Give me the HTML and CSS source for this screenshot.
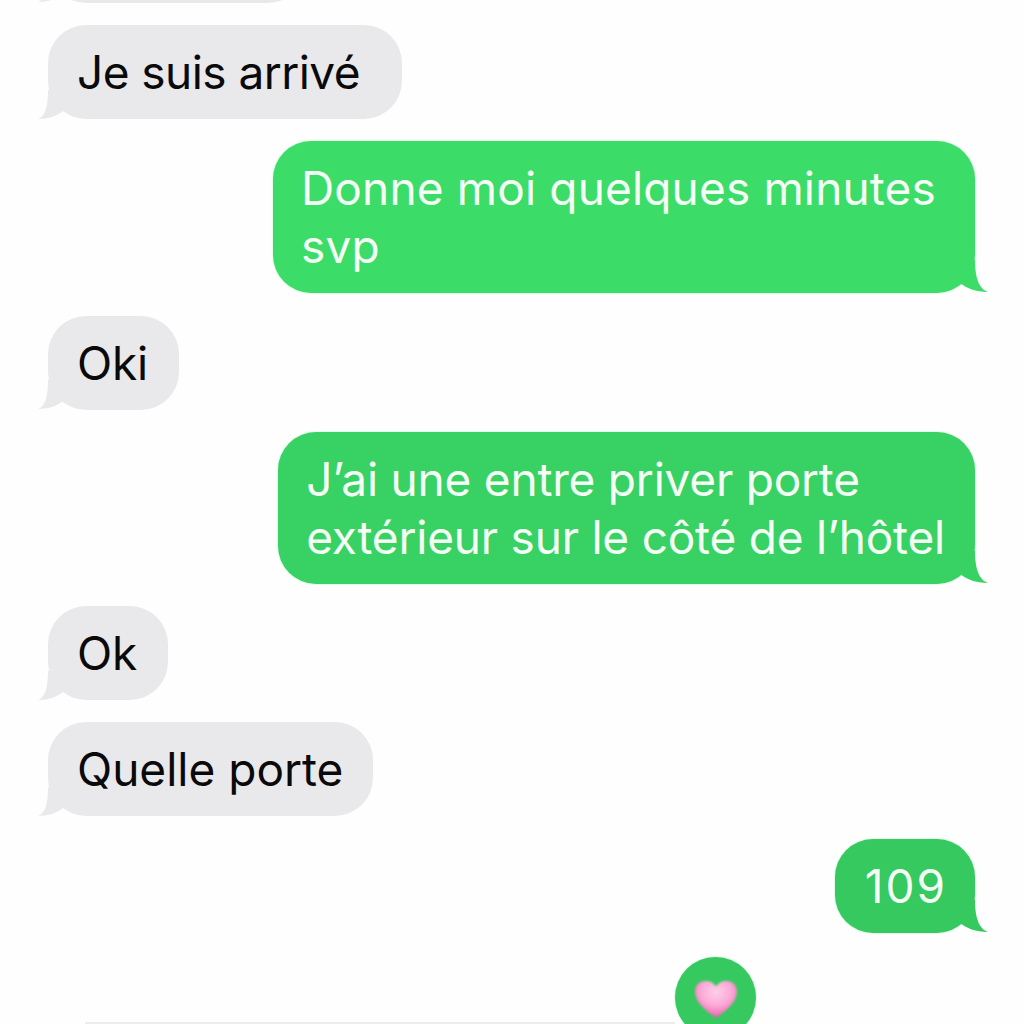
FILE: index.html
```html
<!DOCTYPE html>
<html lang="fr">
<head>
<meta charset="utf-8">
<title>Messages</title>
<link rel="stylesheet" href="styles.css">
</head>
<body>
<main class="thread">
  <div class="bubble in stub"><svg class="tail" viewBox="0 0 28 30"><path d="M28 17L25 21C19 26 10 29 0 29C7 26 10 18 10 0L28 0Z"/></svg></div>
  <div class="bubble in arrive">Je suis arrivé<svg class="tail" viewBox="0 0 28 30"><path d="M28 17L25 21C19 26 10 29 0 29C7 26 10 18 10 0L28 0Z"/></svg></div>
  <div class="bubble out wide bright">Donne moi quelques minutes<br>svp<svg class="tail" viewBox="0 0 32 34"><path d="M0 20L4 23C10 28 20 32 32 32C24 29 19 20 19 0L0 0Z"/></svg></div>
  <div class="bubble in">Oki<svg class="tail" viewBox="0 0 28 30"><path d="M28 17L25 21C19 26 10 29 0 29C7 26 10 18 10 0L28 0Z"/></svg></div>
  <div class="bubble out mid">J’ai une entre priver porte<br>extérieur sur le côté de l’hôtel<svg class="tail" viewBox="0 0 32 34"><path d="M0 20L4 23C10 28 20 32 32 32C24 29 19 20 19 0L0 0Z"/></svg></div>
  <div class="bubble in">Ok<svg class="tail" viewBox="0 0 28 30"><path d="M28 17L25 21C19 26 10 29 0 29C7 26 10 18 10 0L28 0Z"/></svg></div>
  <div class="bubble in door">Quelle porte<svg class="tail" viewBox="0 0 28 30"><path d="M28 17L25 21C19 26 10 29 0 29C7 26 10 18 10 0L28 0Z"/></svg></div>
  <div class="bubble out room">109<svg class="tail" viewBox="0 0 32 34"><path d="M0 20L4 23C10 28 20 32 32 32C24 29 19 20 19 0L0 0Z"/></svg></div>
  <div class="reacted">
    <div class="reaction">
      <svg class="heart" viewBox="0 0 48 42">
        <defs>
          <radialGradient id="pink" cx="50%" cy="30%" r="75%">
            <stop offset="0" stop-color="#fdd0e8"/>
            <stop offset="0.5" stop-color="#fba8d6"/>
            <stop offset="1" stop-color="#ee4fa6"/>
          </radialGradient>
        </defs>
        <path fill="url(#pink)" d="M24 41C14 33 2 25 2 13C2 6 7 2 13 2C18 2 22 4 24 8C26 4 30 2 35 2C41 2 46 6 46 13C46 25 34 33 24 41Z"/>
      </svg>
    </div>
  </div>
  <div class="cut-bubble"></div>
</main>
</body>
</html>
```
FILE: styles.css
```css
* { box-sizing: border-box; }
html, body { margin: 0; height: 100%; }
body {
  background: #fefefe;
  overflow: hidden;
  font-family: Inter, "Liberation Sans", sans-serif;
}
.thread {
  position: relative;
  height: 1024px;
  overflow: hidden;
  display: flex;
  flex-direction: column;
  gap: 22.3px;
  padding: 25px 49px 0 48px;
  font-size: 46px;
  line-height: 58px;
  letter-spacing: -0.2px;
}
.bubble {
  position: relative;
  flex: none;
  padding: 18px 30px;
  border-radius: 38px;
  width: fit-content;
  white-space: nowrap;
}
.stub {
  height: 100px;
  width: 258px;
  margin-top: -122.3px;
  background: #ececee;
}
.in {
  padding-left: 29px;
  padding-right: 31px;
  background: #e9e9eb;
  color: #0a0a0a;
  align-self: flex-start;
}
.arrive {
  width: 354px;
  letter-spacing: -0.55px;
}
.door {
  width: 325px;
  letter-spacing: 0;
}
.out {
  background: #35c95f;
  color: #f4fff6;
  align-self: flex-end;
  box-shadow: 0 0 2px #a8f0bb;
}
.bright { background: #3cdc68; }
.mid {
  padding-left: 28px;
  background: #38d163;
  letter-spacing: -0.22px;
}
.wide {
  width: 702px;
  padding-left: 28px;
  letter-spacing: 0.15px;
}
.room {
  padding-right: 28px;
  letter-spacing: 2px;
}
.tail {
  position: absolute;
  width: 28px;
  height: 30px;
  left: -10px;
  bottom: -0.5px;
  fill: #e9e9eb;
}
.out .tail {
  width: 32px;
  height: 34px;
  left: auto;
  right: -13px;
  bottom: -1px;
  fill: #35c95f;
}
.bright .tail { fill: #3cdc68; }
.mid .tail { fill: #38d163; }
.reacted {
  display: flex;
  flex: none;
  justify-content: flex-end;
  margin-top: 2px;
  padding-right: 219px;
}
.reaction {
  width: 81px;
  height: 81px;
  flex: none;
  border-radius: 50%;
  background: #35c95f;
  box-shadow: 0 0 2px #a8f0bb;
  display: flex;
  align-items: center;
  justify-content: center;
}
.heart {
  width: 46px;
  height: 40px;
  margin-top: 3px;
  filter: blur(1px);
}
.cut-bubble {
  position: absolute;
  left: 85px;
  right: 349px;
  top: 1022px;
  height: 2px;
  background: #ececee;
}
```
